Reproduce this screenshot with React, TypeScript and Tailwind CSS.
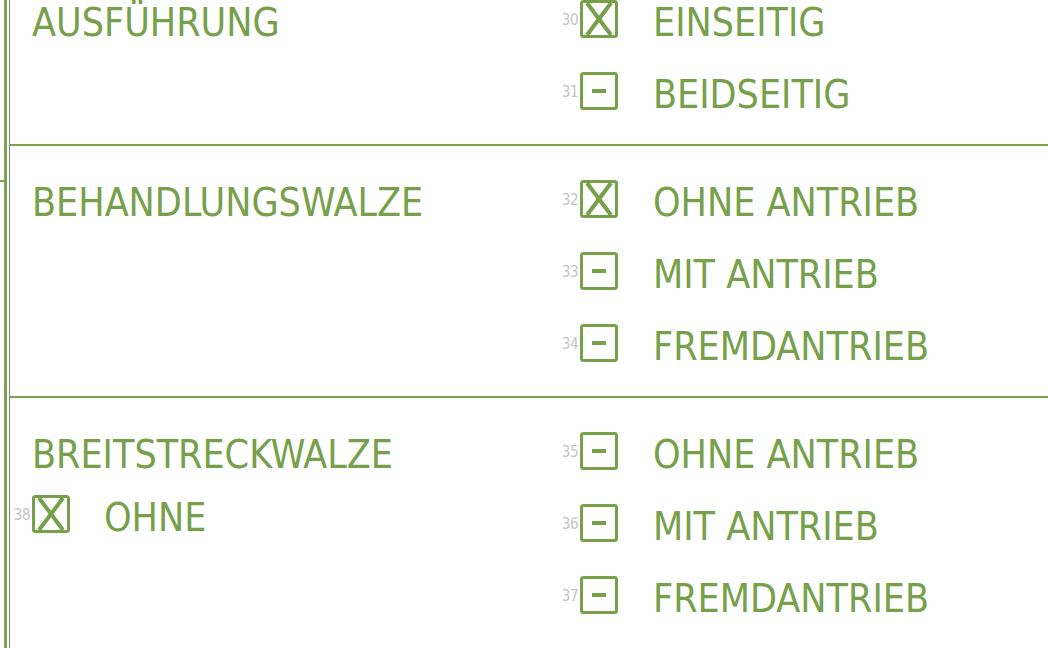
const green = "#76a04a";

type Item = { no: number; label: string; checked: boolean };

const CheckBox = ({ checked }: { checked: boolean }) => (
    <svg width="38" height="38" viewBox="0 0 38 38" className="shrink-0">
        <rect x="1.5" y="1.5" width="35" height="35" rx="2" fill="white" stroke={green} strokeWidth="3" />
        {checked ? (
            <g stroke={green} strokeWidth="4" strokeLinecap="butt">
                <line x1="7" y1="3" x2="31" y2="35" />
                <line x1="31" y1="3" x2="7" y2="35" />
            </g>
        ) : (
            <rect x="12" y="17" width="14" height="4" fill={green} />
        )}
    </svg>
);

const Row = ({ item, numWidth, gap }: { item: Item; numWidth: string; gap: string }) => (
    <div className="flex h-[38px] items-start">
        <div className={`${numWidth} text-right text-[15px] leading-none mt-[13px] tracking-[-0.5px] text-[#c4c4c4]`}>{item.no}</div>
        <div className="ml-[2px]">
            <CheckBox checked={item.checked} />
        </div>
        <div className={`${gap} mt-[4px] text-[39px] leading-[38px] whitespace-nowrap text-[#76a04a]`}>{item.label}</div>
    </div>
);

const Section = ({
    title,
    items,
    extra,
    first,
}: {
    title: string;
    items: Item[];
    extra?: Item;
    first?: boolean;
}) => (
    <div className={`flex ${first ? "pt-0" : "pt-[34px]"} pb-[34px]`}>
        <div className="w-[538px] shrink-0">
            <div className="pl-[22px] mt-[4px] h-[38px] text-[39px] leading-[38px] text-[#76a04a] whitespace-nowrap">{title}</div>
            {extra && (
                <div className="mt-[21px]">
                    <Row item={extra} numWidth="w-[20px]" gap="ml-[34px]" />
                </div>
            )}
        </div>
        <div className="flex flex-col gap-[34px]">
            {items.map((it) => (
                <Row key={it.no} item={it} numWidth="w-[30px]" gap="ml-[35px]" />
            ))}
        </div>
    </div>
);

export default function App() {
    return (
        <div
            className="w-[1048px] h-[648px] overflow-hidden bg-white flex"
            style={{ fontFamily: '"DejaVu Sans Condensed", "DejaVu Sans", sans-serif' }}
        >
            <div className="w-[4px] shrink-0 flex flex-col">
                <div className="h-[180px]" />
                <div className="h-[2px] bg-[#7aa350]" />
            </div>
            <div className="w-[3px] shrink-0 bg-[#7aa350]" />
            <div className="w-[2px] shrink-0" />
            <div className="w-px shrink-0 bg-[#80808f]" />
            <div className="flex-1 flex flex-col">
                <Section
                    first
                    title="AUSFÜHRUNG"
                    items={[
                        { no: 30, label: "EINSEITIG", checked: true },
                        { no: 31, label: "BEIDSEITIG", checked: false },
                    ]}
                />
                <div className="h-[2px] bg-[#7aa350]" />
                <Section
                    title="BEHANDLUNGSWALZE"
                    items={[
                        { no: 32, label: "OHNE ANTRIEB", checked: true },
                        { no: 33, label: "MIT ANTRIEB", checked: false },
                        { no: 34, label: "FREMDANTRIEB", checked: false },
                    ]}
                />
                <div className="h-[2px] bg-[#7aa350]" />
                <Section
                    title="BREITSTRECKWALZE"
                    extra={{ no: 38, label: "OHNE", checked: true }}
                    items={[
                        { no: 35, label: "OHNE ANTRIEB", checked: false },
                        { no: 36, label: "MIT ANTRIEB", checked: false },
                        { no: 37, label: "FREMDANTRIEB", checked: false },
                    ]}
                />
            </div>
        </div>
    );
}
